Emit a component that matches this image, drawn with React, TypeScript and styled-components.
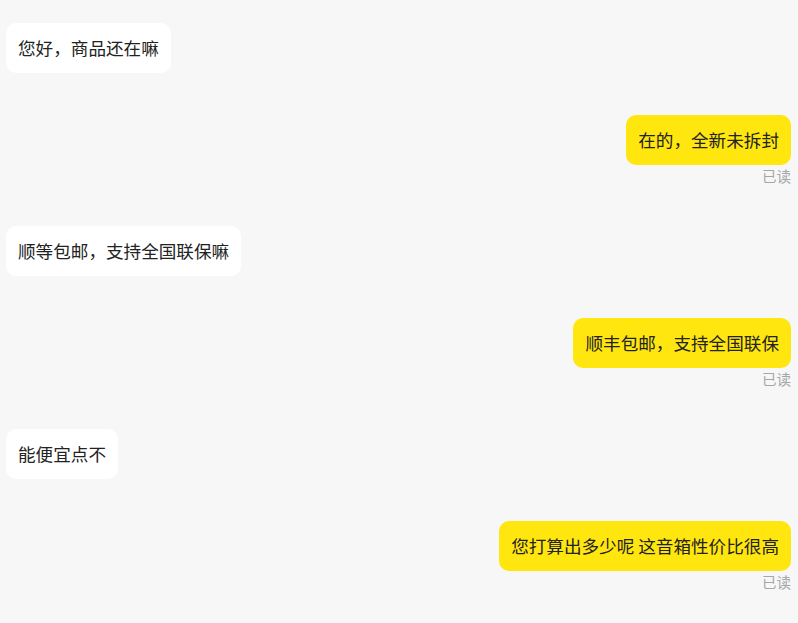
import React from 'react';
import styled, { createGlobalStyle } from 'styled-components';

type Message = {
  id: number;
  content: string;
  isUser: boolean;
  read?: boolean;
};

const messages: Message[] = [
  { id: 1, content: '您好，商品还在嘛', isUser: false },
  { id: 2, content: '在的，全新未拆封', isUser: true, read: true },
  { id: 3, content: '顺等包邮，支持全国联保嘛', isUser: false },
  { id: 4, content: '顺丰包邮，支持全国联保', isUser: true, read: true },
  { id: 5, content: '能便宜点不', isUser: false },
  { id: 6, content: '您打算出多少呢 这音箱性价比很高', isUser: true, read: true },
];

const GlobalStyle = createGlobalStyle`
  html, body {
    margin: 0;
    padding: 0;
    background: #f7f7f7;
  }
  body {
    font-family: 'Noto Sans CJK SC', 'Noto Sans', sans-serif;
  }
`;

const List = styled.div`
  display: flex;
  flex-direction: column;
  gap: 42px;
  padding: 23px 7px 20px 6px;
  min-height: 100vh;
  box-sizing: border-box;
  background: #f7f7f7;
`;

const Row = styled.div<{ isUser: boolean }>`
  display: flex;
  flex-direction: column;
  align-items: ${({ isUser }) => (isUser ? 'flex-end' : 'flex-start')};
`;

const Bubble = styled.div<{ isUser: boolean }>`
  background-color: ${({ isUser }) => (isUser ? '#ffe60f' : '#ffffff')};
  color: #222;
  padding: 12px 12px;
  border-radius: 10px;
  font-size: 17.6px;
  line-height: 26px;
  white-space: pre;
`;

const ReadMark = styled.div`
  margin-top: 3px;
  font-size: 14.5px;
  line-height: 16px;
  color: #a6a6a6;
`;

export default function App() {
  return (
    <>
      <GlobalStyle />
      <List>
        {messages.map((m) => (
          <Row key={m.id} isUser={m.isUser}>
            <Bubble isUser={m.isUser}>{m.content}</Bubble>
            {m.read && <ReadMark>已读</ReadMark>}
          </Row>
        ))}
      </List>
    </>
  );
}
